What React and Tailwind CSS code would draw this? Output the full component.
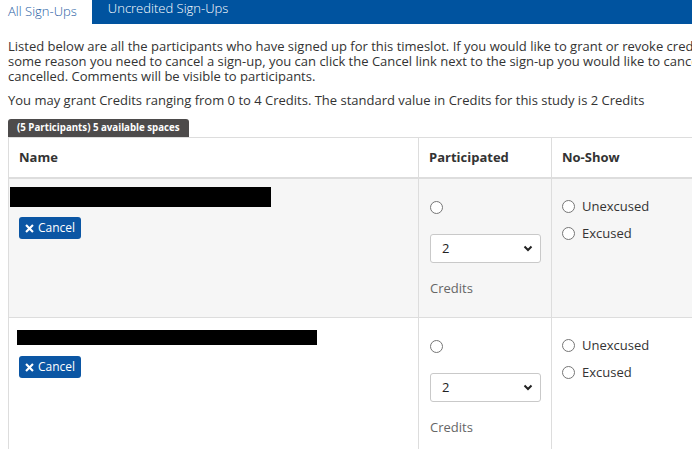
import React from 'react';

const Radio = () => (
  <span className="inline-block w-[13px] h-[13px] rounded-full border border-[#767676] bg-white shrink-0" />
);

const CancelButton = () => (
  <button className="flex items-center gap-[4px] h-[22px] px-[6px] rounded-[3px] bg-[#0b56a4] text-white text-[12px] leading-none">
    <svg width="9" height="9" viewBox="0 0 10 10" className="mt-[1px]">
      <path d="M2 2 L8 8 M8 2 L2 8" stroke="white" strokeWidth="2.4" strokeLinecap="square" />
    </svg>
    Cancel
  </button>
);

const SignUpRow = ({ shaded, redactWidth, redactHeight, redactTop, redactLeft }) => (
  <div className={`grid grid-cols-[410px_133px_220px] border-b border-[#ddd] ${shaded ? 'bg-[#f6f6f6]' : 'bg-white'}`}>
    <div className="h-[138px] border-l border-[#ddd] pl-[1px] pt-[8px]">
      <div className="bg-black" style={{ width: redactWidth, height: redactHeight, marginTop: redactTop, marginLeft: redactLeft }} />
      <div className="pl-[9px]" style={{ marginTop: 30 - redactHeight - redactTop }}>
        <CancelButton />
      </div>
    </div>
    <div className="border-l border-[#ddd] pl-[11px] pt-[22px] flex flex-col items-start">
      <Radio />
      <div className="mt-[20px] w-[111px] h-[29px] rounded-[3px] border border-[#c9c9c9] bg-white flex items-center justify-between pl-[11px] pr-[7px]">
        <span className="text-[13px] text-[#222]">2</span>
        <svg width="10" height="7" viewBox="0 0 10 7">
          <path d="M1.5 1.5 L5 5 L8.5 1.5" stroke="#222" strokeWidth="2" fill="none" />
        </svg>
      </div>
      <div className="mt-[16px] text-[13px] text-[#666] leading-[18px]">Credits</div>
    </div>
    <div className="border-l border-[#ddd] pl-[10px] pt-[18px] flex flex-col gap-[8px]">
      <label className="flex items-center gap-[7px] text-[13px] text-[#333] leading-[19px]">
        <Radio /> Unexcused
      </label>
      <label className="flex items-center gap-[7px] text-[13px] text-[#333] leading-[19px]">
        <Radio /> Excused
      </label>
    </div>
  </div>
);

export default function App() {
  return (
    <div className="w-[692px] h-[449px] overflow-hidden bg-white text-[#333] font-['Open_Sans',sans-serif]">
      <div className="flex h-[24px] bg-[#00539f] text-[13px] font-light w-[900px]">
        <div className="bg-white text-[#1f5da3] pl-[8px] pr-[15px] leading-[22px]">All Sign-Ups</div>
        <div className="text-white px-[16px] leading-[16px]">Uncredited Sign-Ups</div>
      </div>

      <div className="px-[8px] w-[900px]">
        <p className="mt-[15px] text-[13px] leading-[15px] whitespace-nowrap">
          Listed below are all the participants who have signed up for this timeslot. If you would like to grant or revoke credits, check the appropriate box. If for
          <br />
          some reason you need to cancel a sign-up, you can click the Cancel link next to the sign-up you would like to cancel, and it will be removed and marked as
          <br />
          cancelled. Comments will be visible to participants.
        </p>
        <p className="mt-[9px] text-[13px] leading-[15px] whitespace-nowrap">
          You may grant Credits ranging from 0 to 4 Credits. The standard value in Credits for this study is 2 Credits
        </p>

        <div className="mt-[11px] w-fit h-[18px] bg-[#4d4b4b] text-white text-[9.7px] font-bold leading-[18px] px-[9px] rounded-t-[3px]">
          (5 Participants) 5 available spaces
        </div>

        <div className="w-[764px]">
          <div className="grid grid-cols-[410px_133px_220px] border-t border-[#ddd] border-b-2 border-b-[#ddd] text-[13px] font-bold text-[#333]">
            <div className="h-[39px] border-l border-[#ddd] pl-[10px] flex items-center">Name</div>
            <div className="border-l border-[#ddd] pl-[10px] flex items-center">Participated</div>
            <div className="border-l border-[#ddd] pl-[10px] flex items-center">No-Show</div>
          </div>
          <SignUpRow shaded redactWidth={261} redactHeight={20} redactTop={0} redactLeft={0} />
          <SignUpRow redactWidth={300} redactHeight={15} redactTop={4} redactLeft={7} />
        </div>
      </div>
    </div>
  );
}
